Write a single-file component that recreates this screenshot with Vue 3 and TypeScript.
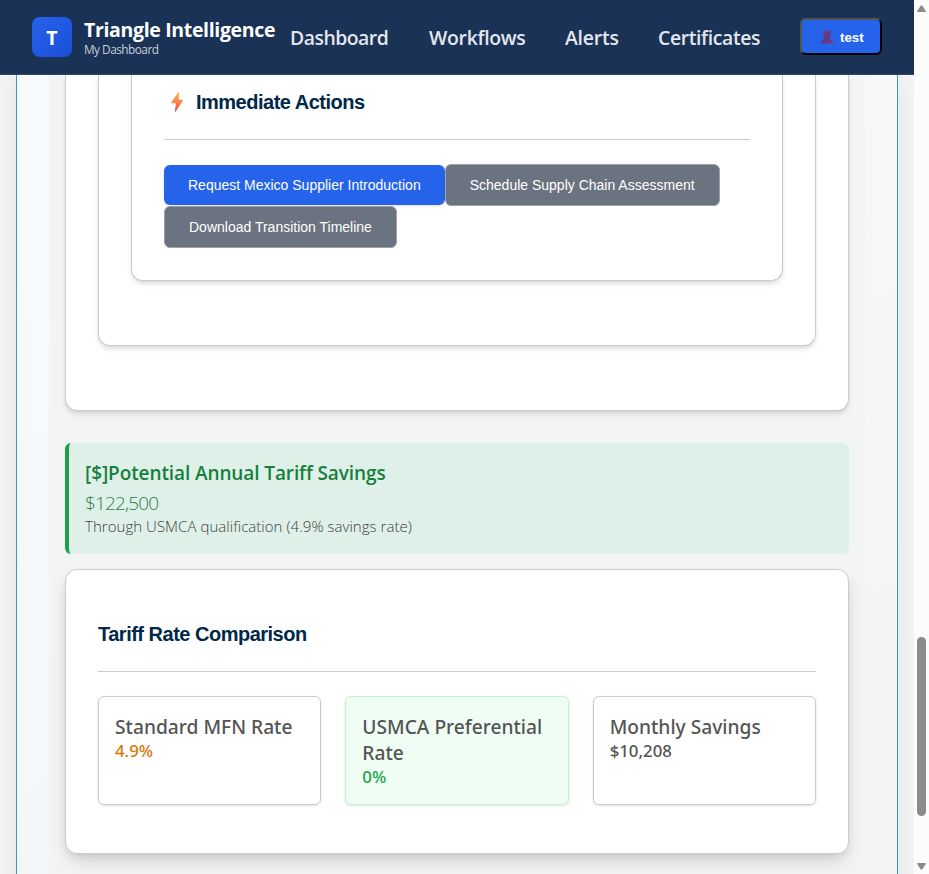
<script setup lang="ts">
interface Rate {
  label: string
  value: string
  tone: 'warning' | 'success' | 'neutral'
}

const links: string[] = ['Dashboard', 'Workflows', 'Alerts', 'Certificates']

const rates: Rate[] = [
  { label: 'Standard MFN Rate', value: '4.9%', tone: 'warning' },
  { label: 'USMCA Preferential Rate', value: '0%', tone: 'success' },
  { label: 'Monthly Savings', value: '$10,208', tone: 'neutral' },
]
</script>

<template>
  <div class="window">
    <div class="viewport">
      <header class="header">
        <div class="logo">T</div>
        <div class="brand">
          <div class="brand-name">Triangle Intelligence</div>
          <div class="brand-sub">My Dashboard</div>
        </div>
        <nav class="nav">
          <a v-for="link in links" :key="link" class="nav-link" :class="link.toLowerCase()">{{ link }}</a>
        </nav>
        <button class="user" type="button">
          <svg class="user-icon" viewBox="0 0 14 14" aria-hidden="true">
            <defs>
              <linearGradient id="bust" x1="0" y1="0" x2="1" y2="1">
                <stop offset="0" stop-color="#5f4a96" />
                <stop offset="0.55" stop-color="#67367f" />
                <stop offset="1" stop-color="#773d86" />
              </linearGradient>
            </defs>
            <path
              fill="url(#bust)"
              d="M3.2 0.8Q7 -0.5 10.8 0.8V4.6Q10.8 7.4 9.4 8.2V9.2L12 10.2Q13.5 10.8 13.5 13.4H0.5Q0.5 10.8 2 10.2L4.6 9.2V8.2Q3.2 7.4 3.2 4.6Z"
            />
          </svg>
          <span>test</span>
        </button>
      </header>

      <main class="shell">
        <div class="content">
          <div class="card card-outer">
            <div class="card card-middle">
              <section class="card card-inner">
                <h3 class="heading">
                  <svg class="bolt" viewBox="0 0 26 22" aria-hidden="true">
                    <defs>
                      <linearGradient id="bolt" x1="0" y1="0" x2="0" y2="1">
                        <stop offset="0" stop-color="#fdb44e" />
                        <stop offset="0.5" stop-color="#fb8747" />
                        <stop offset="1" stop-color="#f0475f" />
                      </linearGradient>
                    </defs>
                    <path fill="url(#bolt)" d="M14.2 1.2L7.4 11.2Q7 12.2 8 12.2H12L10.8 20.3Q11.1 21.2 11.8 20.4L18.8 9.8Q19.2 8.8 18.2 8.8H14.6L15.2 1.6Q15 0.7 14.2 1.2Z" />
                  </svg>
                  <span>Immediate Actions</span>
                </h3>
                <div class="actions">
                  <button class="btn primary" type="button">Request Mexico Supplier Introduction</button>
                  <button class="btn secondary" type="button">Schedule Supply Chain Assessment</button>
                  <button class="btn secondary" type="button">Download Transition Timeline</button>
                </div>
              </section>
            </div>
          </div>

          <section class="savings">
            <div class="savings-title">[$]Potential Annual Tariff Savings</div>
            <div class="savings-value">$122,500</div>
            <div class="savings-text">Through USMCA qualification (4.9% savings rate)</div>
          </section>

          <section class="card card-rates">
            <h3 class="heading">Tariff Rate Comparison</h3>
            <div class="rates">
              <div v-for="rate in rates" :key="rate.label" class="rate" :class="rate.tone">
                <div class="rate-label">{{ rate.label }}</div>
                <div class="rate-value">{{ rate.value }}</div>
              </div>
            </div>
          </section>
        </div>
      </main>
    </div>

    <div class="scrollbar" aria-hidden="true">
      <svg class="arrow" viewBox="0 0 9 8"><path d="M3.6 0.8Q4.5 0 5.4 0.8L8.8 6Q9.2 7 8 7H1Q-0.2 7 0.2 6Z" /></svg>
      <div class="thumb"></div>
      <svg class="arrow" viewBox="0 0 9 8"><path d="M3.6 7.2Q4.5 8 5.4 7.2L8.8 2Q9.2 1 8 1H1Q-0.2 1 0.2 2Z" /></svg>
    </div>
  </div>
</template>

<style>
body {
  overflow: hidden;
}
</style>

<style scoped>
.window {
  display: flex;
  width: 929px;
  height: 874px;
  overflow: hidden;
  font-family: 'Open Sans', 'Noto Sans', sans-serif;
  color: #545454;
}

.window * {
  box-sizing: border-box;
}

.viewport {
  display: flex;
  flex-direction: column;
  width: 914px;
  height: 874px;
  overflow: hidden;
  background: #f3f4f5;
}

.header {
  position: relative;
  z-index: 2;
  display: flex;
  flex: none;
  align-items: center;
  height: 75px;
  padding: 0 32px;
  background: #1a3256;
  border-bottom: 1px solid #31476a;
}

.logo {
  display: flex;
  align-items: center;
  justify-content: center;
  width: 40px;
  height: 40px;
  margin-right: 12px;
  border-radius: 8px;
  background: linear-gradient(135deg, #2563eb, #1d4ed8);
  color: #fff;
  font-size: 19.5px;
  font-weight: 700;
}

.brand {
  width: 206px;
  white-space: nowrap;
}

.brand-name {
  color: #fff;
  font-size: 19.5px;
  font-weight: 700;
  line-height: 24px;
  letter-spacing: -0.34px;
}

.brand-sub {
  color: #c9d0da;
  font-size: 11.8px;
  line-height: 15px;
  letter-spacing: -0.5px;
}

.nav {
  display: flex;
  gap: 40px;
  padding-top: 2px;
}

.nav-link {
  color: #e3e7ed;
  font-size: 19.4px;
  font-weight: 640;
  line-height: 28px;
  white-space: nowrap;
}

.nav-link.dashboard {
  width: 99px;
  letter-spacing: -0.5px;
}

.nav-link.workflows {
  width: 96px;
  letter-spacing: -0.3px;
}

.nav-link.alerts {
  width: 53px;
  letter-spacing: -0.2px;
}

.nav-link.certificates {
  width: 103px;
  letter-spacing: -0.36px;
}

.user {
  display: flex;
  flex: none;
  align-items: center;
  width: 82px;
  height: 37px;
  margin: -2px 0 0 auto;
  padding: 2px 0 0 18px;
  border: 2px outset #000;
  border-radius: 6px;
  background: #2563eb;
  color: #fff;
  font: 700 13.33px 'Liberation Sans', Arial, sans-serif;
}

.user-icon {
  width: 14px;
  height: 14px;
  margin-right: 6px;
}

.shell {
  flex: none;
  width: 882px;
  height: 820px;
  margin-left: 16px;
  padding: 0 32px;
  border: solid #3b94cf;
  border-width: 0 1px;
  background: linear-gradient(150deg, #f8fafc 0%, #f7f9fb 20%, #f4f6f8 55%, #f2f3f5 100%);
  box-shadow: 0 0 24px rgba(0, 0, 0, 0.07);
}

.content {
  height: 820px;
  padding: 0 16px;
  background: #f3f4f6;
}

.card {
  background: #fff;
  border: 1px solid #cacbcd;
  border-radius: 12px;
  box-shadow: 0 4px 6px -1px rgba(0, 0, 0, 0.1), 0 2px 4px -1px rgba(0, 0, 0, 0.08);
}

.card-outer,
.card-middle,
.card-inner {
  border-top: 0;
  border-radius: 0 0 12px 12px;
}

.card-outer,
.card-middle {
  padding: 0 32px 64px;
}

.card-inner {
  padding: 11px 32px 32px;
}

.heading {
  display: flex;
  align-items: center;
  height: 54px;
  margin: 0 0 24px;
  padding-bottom: 21px;
  border-bottom: 1px solid #cacbcd;
  color: #002847;
  font: 700 20px/32px 'Liberation Sans', Arial, sans-serif;
  letter-spacing: -0.5px;
  white-space: nowrap;
}

.bolt {
  width: 26px;
  height: 22px;
  margin-right: 6px;
}

.actions {
  display: flex;
  flex-wrap: wrap;
  align-items: center;
}

.btn {
  height: 42px;
  padding: 0 24px;
  border: 1px solid #9da1a8;
  border-radius: 6px;
  background: #6b7280;
  color: #fff;
  font: 400 14px 'Liberation Sans', Arial, sans-serif;
  white-space: nowrap;
}

.btn.primary {
  height: 40px;
  border: 0;
  background: #2563eb;
  box-shadow: 0 1px 3px rgba(0, 0, 0, 0.12);
}

.savings {
  height: 111px;
  margin: 32px 0 15px;
  padding: 15px 16px;
  border-left: 4px solid #16a34a;
  border-radius: 6px;
  background: #dff0e8;
  white-space: nowrap;
}

.savings-title {
  color: #15803d;
  font-size: 19px;
  font-weight: 600;
  line-height: 30px;
  letter-spacing: -0.1px;
}

.savings-value {
  color: #2f7d4f;
  font-size: 19px;
  font-weight: 300;
  line-height: 30px;
  letter-spacing: -0.85px;
}

.savings-text {
  margin-top: -2px;
  color: #3c4141;
  font-size: 15px;
  font-weight: 300;
  line-height: 20px;
  letter-spacing: 0.04px;
}

.card-rates {
  padding: 48px 32px;
  box-shadow: 0 10px 20px -3px rgba(0, 0, 0, 0.13), 0 4px 8px -2px rgba(0, 0, 0, 0.1);
}

.rates {
  display: grid;
  grid-template-columns: repeat(3, 1fr);
  gap: 24px;
}

.rate {
  height: 109px;
  padding: 17px 16px 16px;
  border: 1px solid #cacbcd;
  border-radius: 6px;
  box-shadow: 0 1px 3px rgba(0, 0, 0, 0.12);
  font-family: 'Noto Sans', 'Open Sans', sans-serif;
}

.rate.success {
  border-color: #bbf7d0;
  background: #f0fdf4;
}

.rate-label {
  font-size: 19.2px;
  font-weight: 500;
  line-height: 26px;
}

.rate-value {
  font-size: 16.8px;
  font-weight: 500;
  line-height: 22px;
}

.warning .rate-value {
  color: #d97706;
}

.success .rate-value {
  color: #16a34a;
}

.scrollbar {
  display: flex;
  flex-direction: column;
  align-items: center;
  width: 15px;
  height: 874px;
  padding: 5px 0 4px;
  background: #fcfcfc;
}

.arrow {
  flex: none;
  width: 9px;
  height: 8px;
  fill: #8b8b8b;
}

.thumb {
  width: 9px;
  height: 179px;
  margin: 624px 0 auto;
  border-radius: 5px;
  background: #8b8b8b;
}
</style>
